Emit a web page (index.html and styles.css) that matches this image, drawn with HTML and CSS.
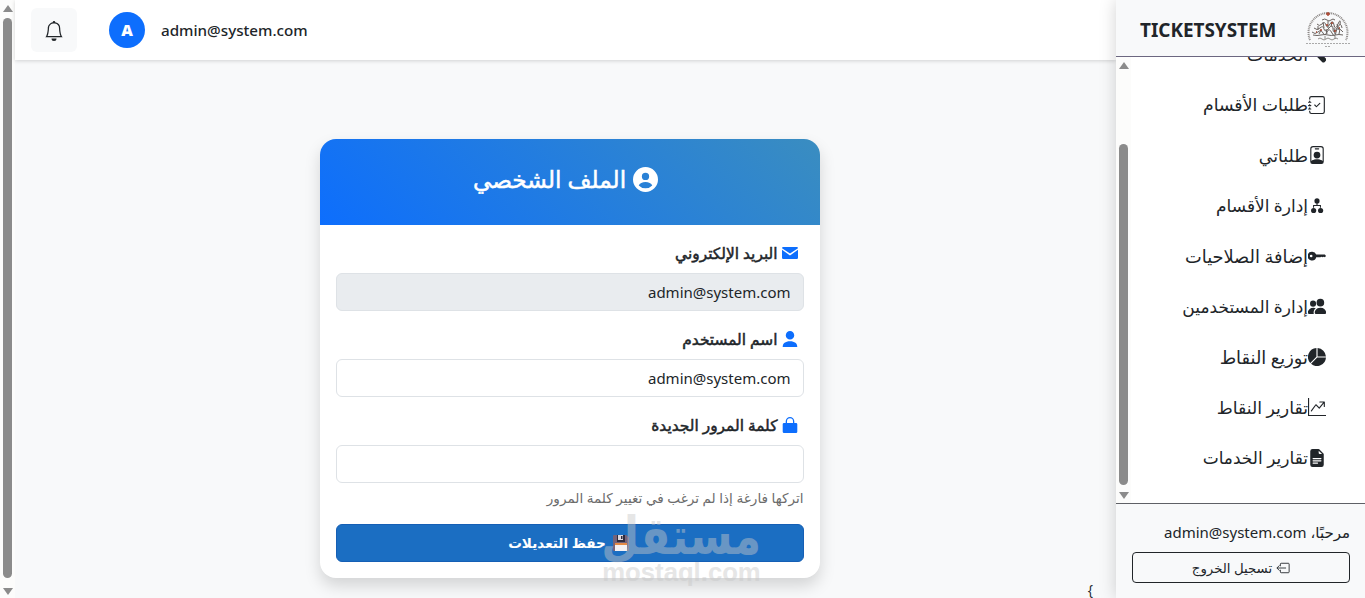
FILE: index.html
```
<!DOCTYPE html>
<html lang="ar" dir="rtl">
<head>
  <meta charset="UTF-8">
  <meta name="viewport" content="width=device-width, initial-scale=1.0">
  <title>الملف الشخصي</title>
  <link rel="stylesheet" href="styles.css">
</head>
<body>
  <aside class="sidebar">
    <div class="sidebar-header">
      <svg class="logo" viewBox="0 0 44 40">
        <path class="logo-ring" d="M4 32A19.500 19.500 0 1 1 40 32"/>
        <path class="logo-script" d="M16 12q3-2 5 0t4 0 4 0M11 16q2 3 5 0t4 1 4-1 4 1 4-1 2 1M8 20q3 3 6 0t4 1 5-1 4 1 4-1 5 0M6 24q3 3 6 0t5 1 4-1 5 1 4-1 7 0M7 27q4 1 8 0t7 0 7 0 8 0"/>
        <path class="logo-script" d="M12 18v4M17 14l1 6M22 13v7M26 14l-1 5M31 16l2 6M15 22l-2 4M20 21l1 5M28 20l1 6M34 21l-1 5"/>
        <path class="logo-small" d="M12 31q2-2 4 0t4 0 4 0 4 0 4 0M19 28v3M29 28v3"/>
        <path class="logo-red" d="M22 4v4M20 6h4M14 22h2M20 17h2M28 23h2M25 15h2M10 24h1M33 20h1"/>
        <path class="logo-caption" d="M0 35.500h44M19 38.500h6"/>
      </svg>
      <span class="brand">TICKETSYSTEM</span>
    </div>

    <div class="nav-wrap">
      <ul class="nav">
        <li>
          <svg class="icon" viewBox="0 0 16 16"><path d="M1 0 0 1l2.200 3.100 1 .2 5 5-.2 1.200 4.500 4.500a1.700 1.700 0 0 0 2.400 0l.8-.8a1.700 1.700 0 0 0 0-2.400L11.200 7.300 9.500 7.500 4.200 3.200 4 2.200z"/></svg>
          <span>الخدمات</span>
        </li>
        <li>
          <svg class="icon" viewBox="0 0 16 16"><path d="M10.854 6.146a.5.5 0 0 1 0 .708l-3 3a.5.5 0 0 1-.708 0l-1.500-1.500a.5.5 0 1 1 .708-.708L7.500 8.793l2.646-2.647a.5.5 0 0 1 .708 0"/><path d="M3 0h10a2 2 0 0 1 2 2v12a2 2 0 0 1-2 2H3a2 2 0 0 1-2-2v-1h1v1a1 1 0 0 0 1 1h10a1 1 0 0 0 1-1V2a1 1 0 0 0-1-1H3a1 1 0 0 0-1 1v1H1V2a2 2 0 0 1 2-2"/><path d="M1 5v-.5a.5.5 0 0 1 1 0V5h.5a.5.5 0 0 1 0 1h-2a.5.5 0 0 1 0-1zm0 3v-.5a.5.5 0 0 1 1 0V8h.5a.5.5 0 0 1 0 1h-2a.5.5 0 0 1 0-1zm0 3v-.5a.5.5 0 0 1 1 0v.5h.5a.5.5 0 0 1 0 1h-2a.5.5 0 0 1 0-1z"/></svg>
          <span>طلبات الأقسام</span>
        </li>
        <li>
          <svg class="icon" viewBox="0 0 16 16"><path d="M6.500 2a.5.5 0 0 0 0 1h3a.5.5 0 0 0 0-1zM11 8a3 3 0 1 1-6 0 3 3 0 0 1 6 0"/><path d="M4.500 0A2.500 2.500 0 0 0 2 2.500V14a2 2 0 0 0 2 2h8a2 2 0 0 0 2-2V2.500A2.500 2.500 0 0 0 11.500 0zM3 2.500A1.500 1.500 0 0 1 4.500 1h7A1.500 1.500 0 0 1 13 2.500v10.795a4.200 4.200 0 0 0-.776-.492C11.392 12.387 10.063 12 8 12s-3.392.387-4.224.803a4.200 4.200 0 0 0-.776.492z"/><path d="M3 13.300q5-2.600 10 0V15H3z"/></svg>
          <span>طلباتي</span>
        </li>
        <li>
          <svg class="icon" viewBox="0 0 16 16"><circle cx="8" cy="3.500" r="2.300"/><circle cx="5" cy="12" r="2.300"/><circle cx="11.200" cy="12" r="2.300"/><path d="M7.500 5h1v2h3v2.500h-.9V7.900H5.400v1.600h-.9V7h3z"/></svg>
          <span class="nav-sm">إدارة الأقسام</span>
        </li>
        <li>
          <svg class="icon" viewBox="0 0 16 16"><path fill-rule="evenodd" d="M3.800 4.200A3.900 3.900 0 0 1 7.300 6.700H15l1 1.200-1 1.200-1-.4-1 .5-1-.5-1 .5H7.300A3.900 3.900 0 1 1 3.800 4.200M2.800 6.800a1.200 1.200 0 1 0 0 2.400 1.200 1.200 0 0 0 0-2.400"/></svg>
          <span class="nav-lg">إضافة الصلاحيات</span>
        </li>
        <li>
          <svg class="icon" viewBox="0 0 16 16"><path d="M6.600 15s-.6-.2-.6-1.200 1-4.300 5-4.300 5.200 3.300 5.200 4.300-.6 1.200-1 1.200zM11 8.400a3.400 3.400 0 1 0 0-6.800 3.400 3.400 0 0 0 0 6.800M5.200 15A2.240 2.240 0 0 1 5 13.800c0-1.355.68-2.950 1.936-3.920A6.300 6.300 0 0 0 5 9.500c-4 0-5.200 3.200-5.200 4.200s.6 1.300 1 1.300zM4.500 8.600a2.700 2.700 0 1 0 0-5.400 2.700 2.700 0 0 0 0 5.400"/></svg>
          <span class="nav-sm">إدارة المستخدمين</span>
        </li>
        <li>
          <svg class="icon" viewBox="0 0 16 16"><path d="M15.985 8.500H8.207l-5.500 5.500a8 8 0 0 0 13.277-5.500zM2 13.292A8 8 0 0 1 7.500.015v7.778zM8.500.015V7.500h7.485A8 8 0 0 0 8.500.015"/></svg>
          <span class="nav-lg">توزيع النقاط</span>
        </li>
        <li>
          <svg class="icon" viewBox="0 0 16 16"><path fill-rule="evenodd" d="M0 0h1v15h15v1H0zm10 3.500a.5.5 0 0 1 .5-.5h4a.5.5 0 0 1 .5.5v4a.5.5 0 0 1-1 0V4.900l-3.613 4.417a.5.5 0 0 1-.74.037L7.060 6.767l-3.656 5.027a.5.5 0 0 1-.808-.588l4-5.500a.5.5 0 0 1 .758-.06l2.609 2.610L13.445 4H10.500a.5.5 0 0 1-.5-.5"/></svg>
          <span>تقارير النقاط</span>
        </li>
        <li>
          <svg class="icon" viewBox="0 0 16 16"><path d="M9.293 0H4a2 2 0 0 0-2 2v12a2 2 0 0 0 2 2h8a2 2 0 0 0 2-2V4.707A1 1 0 0 0 13.707 4L10 .293A1 1 0 0 0 9.293 0M9.500 3.500v-2l3 3h-2a1 1 0 0 1-1-1M4.500 9a.5.5 0 0 1 0-1h7a.5.5 0 0 1 0 1zM4 10.500a.5.5 0 0 1 .5-.5h7a.5.5 0 0 1 0 1h-7a.5.5 0 0 1-.5-.5m.5 2.500a.5.5 0 0 1 0-1h4a.5.5 0 0 1 0 1z"/></svg>
          <span class="nav-sm">تقارير الخدمات</span>
        </li>
      </ul>
      <div class="scrollbar">
        <span class="arrow-up"></span>
        <span class="thumb nav-thumb"></span>
        <span class="arrow-down"></span>
      </div>
    </div>

    <div class="sidebar-footer">
      <div class="welcome"><span>مرحبًا،</span> <bdi>admin@system.com</bdi></div>
      <button class="btn-logout" type="button">
        <svg class="icon-sm" viewBox="0 0 16 16"><path d="M5 6V3.500a.9.9 0 0 1 .9-.9h8.200a.9.9 0 0 1 .9.9v9a.9.9 0 0 1-.9.9H5.900a.9.9 0 0 1-.9-.9V10M11.500 8H1M4 5 1 8l3 3"/></svg>
        <span>تسجيل الخروج</span>
      </button>
    </div>
  </aside>

  <div class="main">
    <header class="topbar">
      <span class="user-name">admin@system.com</span>
      <span class="avatar">A</span>
      <button class="bell" type="button">
        <svg viewBox="0 0 16 16"><path d="M8 16a2 2 0 0 0 2-2H6a2 2 0 0 0 2 2M8 1.918l-.797.161A4 4 0 0 0 4 6c0 .628-.134 2.197-.459 3.742-.16.767-.376 1.566-.663 2.258h10.244c-.287-.692-.502-1.490-.663-2.258C12.134 8.197 12 6.628 12 6a4 4 0 0 0-3.203-3.920zM14.220 12c.223.447.481.801.78 1H1c.299-.199.557-.553.78-1C2.680 10.200 3 6.880 3 6c0-2.420 1.720-4.440 4.005-4.901a1 1 0 1 1 1.990 0A5 5 0 0 1 13 6c0 .88.32 4.200 1.220 6"/></svg>
      </button>
    </header>

    <main class="content">
      <section class="card">
        <div class="card-header">
          <svg viewBox="0 0 24 24"><path fill-rule="evenodd" d="M12 0a12 12 0 1 0 0 24 12 12 0 0 0 0-24M12 5.500a3.500 3.500 0 1 1 0 7 3.500 3.500 0 0 1 0-7M12 14.500c3 0 5.700 1.300 6.500 3.200a9 9 0 0 1-13 0c.8-1.900 3.500-3.200 6.500-3.200"/></svg>
          <h1>الملف الشخصي</h1>
        </div>
        <form class="card-body">
          <label for="email">
            <svg viewBox="0 0 16 16"><path d="M0 3.200A1.200 1.200 0 0 1 1.200 2h13.600A1.200 1.200 0 0 1 16 3.200L8 8.500zM0 4.700l8 5.700 8-5.700v8.100a1.200 1.200 0 0 1-1.200 1.200H1.200A1.200 1.200 0 0 1 0 12.800z"/></svg>
            <span>البريد الإلكتروني</span>
          </label>
          <input id="email" type="text" value="admin@system.com" disabled>

          <label for="username">
            <svg viewBox="0 0 16 16"><path d="M.7 16c0-3.500 2.600-5.700 7.300-5.700s7.300 2.200 7.300 5.700zM8 8.500A4.200 4.200 0 1 0 8 0a4.200 4.200 0 0 0 0 8.500"/></svg>
            <span>اسم المستخدم</span>
          </label>
          <input id="username" type="text" value="admin@system.com">

          <label for="password">
            <svg viewBox="0 0 16 16"><path fill-rule="evenodd" d="M8 0a4.300 4.300 0 0 1 4.300 4.300V6H14A1.300 1.300 0 0 1 15.300 7.300v7.400a1.300 1.300 0 0 1-1.300 1.300H2A1.300 1.300 0 0 1 .7 14.700V7.300A1.300 1.300 0 0 1 2 6h1.700V4.300A4.300 4.300 0 0 1 8 0m0 1.300a3 3 0 0 0-3 3V6h6V4.300a3 3 0 0 0-3-3"/></svg>
            <span>كلمة المرور الجديدة</span>
          </label>
          <input id="password" type="password">
          <small class="hint">اتركها فارغة إذا لم ترغب في تغيير كلمة المرور</small>

          <button class="btn-save" type="submit">
            <svg viewBox="0 0 16 16"><path d="M1 0h12.500L16 2.500V15a1 1 0 0 1-1 1H1a1 1 0 0 1-1-1V1a1 1 0 0 1 1-1" fill="#75637a"/><path d="M4 0h8v7H4z" fill="#2e2b3d"/><path d="M5 0h5v5H5z" fill="#ddd8de"/><path d="M8 1h1.500v3H8z" fill="#2e2b3d"/><path d="M2 8h12v3H2z" fill="#e58a45"/><path d="M2 10h12v6H2z" fill="#f4f1f4"/></svg>
            <span>حفظ التعديلات</span>
          </button>
        </form>
        <div class="watermark">
          <span class="wm-ar">مستقل</span>
          <span class="wm-en">mostaql.com</span>
        </div>
      </section>
      <span class="brace">}</span>
    </main>
  </div>

  <div class="scrollbar">
    <span class="arrow-up"></span>
    <span class="thumb page-thumb"></span>
    <span class="arrow-down"></span>
  </div>
</body>
</html>
```
FILE: styles.css
```
* {
  box-sizing: border-box;
}

body {
  margin: 0;
  height: 598px;
  display: flex;
  overflow: hidden;
  background-color: #f8f9fa;
  color: #212529;
  font-family: "Open Sans", "DejaVu Sans", sans-serif;
  font-size: 16px;
}

svg {
  display: block;
  flex: none;
  fill: currentColor;
}

button, input {
  font-family: inherit;
}

/* Sidebar */
.sidebar {
  width: 249px;
  flex: none;
  display: flex;
  flex-direction: column;
  background-color: #fff;
  box-shadow: 0 0 16px rgba(0, 0, 0, 0.18);
  z-index: 2;
}

.sidebar-header {
  height: 57px;
  display: flex;
  align-items: center;
  justify-content: space-between;
  padding: 0 15px 0 24px;
  background-color: #f8f9fa;
  border-bottom: 1px solid #6c6780;
}

.brand {
  font-family: "Noto Sans", sans-serif;
  font-size: 18.9px;
  font-weight: bold;
  line-height: 24px;
  padding-top: 3px;
}

.logo {
  width: 44px;
  height: 40px;
}

.logo path {
  fill: none;
  stroke: #77736f;
}

.logo .logo-ring {
  stroke: #8b8785;
  stroke-width: 2;
  stroke-dasharray: 1 0.8;
}

.logo .logo-script {
  stroke: #6a6461;
  stroke-width: 1;
}

.logo .logo-small {
  stroke-width: 0.8;
}

.logo .logo-red {
  stroke: #a8442e;
  stroke-width: 1.4;
}

.logo .logo-caption {
  stroke: #aaa;
  stroke-dasharray: 2 1;
}

.nav-wrap {
  flex: 1;
  min-height: 0;
  display: flex;
  overflow: hidden;
}

.nav {
  flex: 1;
  list-style: none;
  margin: -28px 0 0;
  padding: 0 39px 0 0;
}

.nav li {
  height: 50.45px;
  display: flex;
  align-items: center;
  font-size: 17.3px;
  white-space: nowrap;
}

.nav .nav-sm {
  font-size: 17px;
}

.nav .nav-lg {
  font-size: 17.8px;
}

.icon {
  width: 18px;
  height: 18px;
}

.sidebar-footer {
  height: 95px;
  padding: 16px 15px 0 16px;
  background-color: #f8f9fa;
  border-top: 1px solid #5f6066;
}

.welcome {
  height: 24px;
  line-height: 24px;
  margin-bottom: 8px;
  font-family: "Noto Sans", "DejaVu Sans", sans-serif;
  font-size: 15px;
  white-space: nowrap;
}

.btn-logout {
  width: 100%;
  height: 31px;
  display: flex;
  align-items: center;
  justify-content: center;
  gap: 4px;
  background: none;
  border: 1px solid #212529;
  border-radius: 4px;
  color: #212529;
  font-size: 13.3px;
}

.icon-sm {
  width: 14px;
  height: 14px;
  fill: none;
  stroke: currentColor;
}

/* Main area */
.main {
  flex: 1;
  display: flex;
  flex-direction: column;
}

.topbar {
  height: 60px;
  flex: none;
  display: flex;
  align-items: center;
  justify-content: flex-end;
  padding-left: 16px;
  background-color: #fff;
  box-shadow: 0 1px 4px rgba(0, 0, 0, 0.16);
  z-index: 1;
}

.user-name {
  font-family: "Noto Sans", sans-serif;
  font-size: 15.2px;
  font-weight: 500;
}

.avatar {
  width: 36px;
  height: 36px;
  margin: 0 16px 0 32px;
  border-radius: 50%;
  background-color: #0d6efd;
  color: #fff;
  font-size: 16px;
  font-weight: 800;
  line-height: 37px;
  text-align: center;
}

.bell {
  width: 46px;
  height: 44px;
  display: flex;
  align-items: center;
  justify-content: center;
  padding-top: 3px;
  border: none;
  border-radius: 6px;
  background-color: #f8f9fa;
  color: #212529;
}

.bell svg {
  width: 20px;
  height: 20px;
}

.content {
  flex: 1;
  display: flex;
  flex-direction: column;
  align-items: center;
  padding-top: 79px;
}

.card {
  position: relative;
  width: 500px;
  height: 439px;
  flex: none;
  margin-right: -8px;
  border-radius: 16px;
  background-color: #fff;
  box-shadow: 0 8px 16px rgba(0, 0, 0, 0.15);
}

.card-header {
  height: 86px;
  display: flex;
  align-items: center;
  justify-content: center;
  gap: 7px;
  padding: 0 8px 6px 0;
  border-radius: 16px 16px 0 0;
  background: linear-gradient(45deg, #0d6efd, #3a8dc0);
  color: #fff;
}

.card-header svg {
  width: 25px;
  height: 25px;
}

.card-header h1 {
  margin: 0;
  font-size: 23.2px;
  font-weight: 500;
  white-space: nowrap;
  -webkit-text-stroke: 0.5px #fff;
}

.card-body {
  padding: 16px;
  display: flex;
  flex-direction: column;
}

.card-body label {
  height: 24px;
  display: flex;
  align-items: center;
  gap: 4px;
  margin-bottom: 8px;
  padding-right: 6px;
  font-size: 15.4px;
  white-space: nowrap;
  -webkit-text-stroke: 0.5px #212529;
}

.card-body label svg {
  width: 16px;
  height: 16px;
  color: #0d6efd;
  -webkit-text-stroke: 0;
}

.card-body input {
  height: 38px;
  margin-bottom: 16px;
  padding: 0 12px;
  border: 1px solid #dee2e6;
  border-radius: 6px;
  background-color: #fff;
  color: #212529;
  font-family: "Noto Sans", sans-serif;
  font-size: 15px;
}

.card-body input:disabled {
  background-color: #e9ecef;
}

#password {
  margin-bottom: 4px;
}

.hint {
  height: 21px;
  margin-bottom: 16px;
  color: #6c6c6c;
  font-size: 13.6px;
  line-height: 21px;
  white-space: nowrap;
}

.btn-save {
  height: 38px;
  display: flex;
  align-items: center;
  justify-content: center;
  gap: 7px;
  padding: 0 8px 1px 6px;
  border: 1px solid #155fb5;
  border-radius: 6px;
  background-color: #1b6ec2;
  color: #fff;
  font-size: 13.6px;
  font-weight: bold;
}

.btn-save svg {
  width: 16px;
  height: 16px;
}

/* Watermark laid over the card */
.watermark {
  position: absolute;
  left: 283px;
  top: 373px;
  width: 158px;
  display: flex;
  flex-direction: column;
  align-items: center;
  opacity: 0.45;
  color: #c8c8c8;
}

.wm-ar, .wm-en {
  font-weight: bold;
}

.wm-ar {
  font-family: "DejaVu Sans", sans-serif;
  font-size: 52px;
  line-height: 48px;
  transform: scaleX(0.84);
}

.wm-en {
  font-family: "Liberation Sans", sans-serif;
  font-size: 25.7px;
  line-height: 24px;
}

.brace {
  align-self: flex-start;
  margin-right: 23px;
  font-size: 14px;
  line-height: 24px;
}

/* Scrollbars */
.scrollbar {
  width: 15px;
  flex: none;
  display: flex;
  flex-direction: column;
  align-items: center;
  background-color: #fcfcfb;
}

.arrow-up, .arrow-down {
  border: 5px solid transparent;
}

.arrow-up {
  border-top: 0;
  border-bottom: 7px solid #8b8b8b;
  margin-top: 5px;
}

.arrow-down {
  border-bottom: 0;
  border-top: 7px solid #8b8b8b;
}

.thumb {
  width: 9px;
  border-radius: 5px;
  background-color: #8b8b8b;
}

.page-thumb {
  height: 560px;
  margin: 6px 0 10px;
}

.nav-thumb {
  height: 341px;
  margin: 75px 0 7px;
}
```
